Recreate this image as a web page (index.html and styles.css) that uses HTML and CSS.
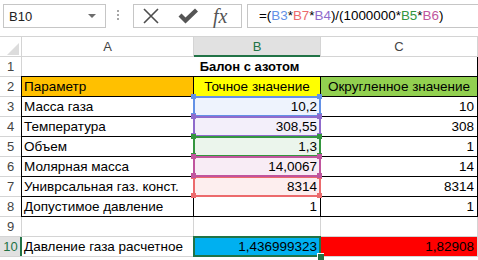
FILE: index.html
```html
<!DOCTYPE html>
<html lang="ru">
<head>
  <meta charset="UTF-8" />
  <meta name="viewport" content="width=device-width, initial-scale=1.0" />
  <title>Балон с азотом</title>
  <link rel="stylesheet" href="styles.css">
</head>
<body>
  <div class="formula-bar">
    <div class="name-box">B10<span class="arrow"></span></div>
    <div class="grip"><i></i><i></i><i></i></div>
    <div class="fx-buttons">
      <svg class="ico-cancel" width="16" height="16" viewBox="0 0 16 16">
        <path d="M1 1 L15 15 M15 1 L1 15" stroke="#4d4d4d" stroke-width="1.6" fill="none" />
      </svg>
      <svg class="ico-enter" width="21" height="16" viewBox="0 0 21 16">
        <path d="M0.5 8.5 L3.5 5.5 L7.5 9.5 L17 0.5 L20 3.5 L7.5 15.5 Z" fill="#555" />
      </svg>
      <span class="fx">fx</span>
    </div>
    <div class="formula">=(<span class="ref-b3">B3</span>*<span class="ref-b7">B7</span>*<span class="ref-b4">B4</span>)/(1000000*<span class="ref-b5">B5</span>*<span class="ref-b6">B6</span>)</div>
  </div>

  <div class="sheet">
    <div class="corner"></div>
    <div class="col-head">A</div>
    <div class="col-head active">B</div>
    <div class="col-head">C</div>

    <div class="row-head">1</div>
    <div class="cell title">Балон с азотом</div>

    <div class="row-head">2</div>
    <div class="cell bordered orange">Параметр</div>
    <div class="cell bordered yellow center">Точное значение</div>
    <div class="cell bordered green center">Округленное значение</div>

    <div class="row-head">3</div>
    <div class="cell bordered">Масса газа</div>
    <div class="cell num ref b3">10,2</div>
    <div class="cell bordered num">10</div>

    <div class="row-head">4</div>
    <div class="cell bordered">Температура</div>
    <div class="cell num ref b4">308,55</div>
    <div class="cell bordered num">308</div>

    <div class="row-head">5</div>
    <div class="cell bordered">Объем</div>
    <div class="cell num ref b5">1,3</div>
    <div class="cell bordered num">1</div>

    <div class="row-head">6</div>
    <div class="cell bordered">Молярная масса</div>
    <div class="cell num ref b6">14,0067</div>
    <div class="cell bordered num">14</div>

    <div class="row-head">7</div>
    <div class="cell bordered">Униврсальная газ. конст.</div>
    <div class="cell num ref b7">8314</div>
    <div class="cell bordered num">8314</div>

    <div class="row-head">8</div>
    <div class="cell bordered">Допустимое давление</div>
    <div class="cell bordered num">1</div>
    <div class="cell bordered num">1</div>

    <div class="row-head">9</div>
    <div class="cell"></div>
    <div class="cell"></div>
    <div class="cell"></div>

    <div class="row-head active">10</div>
    <div class="cell">Давление газа расчетное</div>
    <div class="cell num current">1,436999323</div>
    <div class="cell num red">1,82908</div>
  </div>
</body>
</html>
```

FILE: styles.css
```css
/* Цвета листа */
:root {
  --grid: #d4d4d4;
  --box-line: #c6c6c6;
  --head-text: #444444;
  --excel-green: #217346;
  --ref-b3: #6391e6;
  --ref-b4: #8f6bcc;
  --ref-b5: #34963f;
  --ref-b6: #c0559e;
  --ref-b7: #ec6a6c;
}

* {
  box-sizing: border-box;
}

body {
  margin: 0;
  width: 478px;
  height: 260px;
  overflow: hidden;
  background: #fff;
  color: #000;
  font-family: 'Liberation Sans', Arial, sans-serif;
  font-size: 13.5px;
}

/* Строка формул */
.formula-bar {
  display: flex;
  align-items: flex-start;
  height: 36px;
  padding: 4px 0 0 3px;
}

.name-box {
  display: flex;
  align-items: center;
  justify-content: space-between;
  width: 103px;
  height: 24px;
  padding: 0 9px 0 5px;
  border: 1px solid var(--box-line);
  color: #222;
  font-size: 13px;
}

.name-box .arrow {
  width: 0;
  height: 0;
  border-left: 4px solid transparent;
  border-right: 4px solid transparent;
  border-top: 4px solid #6d6d6d;
}

.grip {
  display: flex;
  flex-direction: column;
  gap: 2px;
  margin: 6px 14px 0 11px;
}

.grip i {
  width: 2px;
  height: 2px;
  background: #a6a6a6;
}

.fx-buttons {
  display: flex;
  align-items: center;
  width: 109px;
  height: 24px;
  padding-left: 9px;
  border: 1px solid var(--box-line);
}

.ico-cancel {
  margin-right: 19px;
}

.ico-enter {
  margin-right: 14px;
}

.fx {
  font-family: 'Liberation Serif', 'Times New Roman', serif;
  font-style: italic;
  font-size: 20px;
  color: #555;
  line-height: 22px;
}

.formula {
  flex: 1;
  height: 24px;
  margin-left: 5px;
  padding-left: 11px;
  border: 1px solid var(--box-line);
  border-right: none;
  line-height: 22px;
  font-size: 13.4px;
  color: #000;
}

.ref-b3 { color: var(--ref-b3); }
.ref-b4 { color: var(--ref-b4); }
.ref-b5 { color: var(--ref-b5); }
.ref-b6 { color: var(--ref-b6); }
.ref-b7 { color: var(--ref-b7); }

/* Лист */
.sheet {
  display: grid;
  grid-template-columns: 21px 171px 126px 156px;
  grid-auto-rows: 19px;
  gap: 1px;
  padding: 1px 1px 1px 0;
  background: var(--grid);
}

.corner {
  display: flex;
  justify-content: flex-end;
  align-items: flex-end;
  padding: 0 2px 1px 0;
  background: #fff;
}

.corner::after {
  content: "";
  border-left: 12px solid transparent;
  border-bottom: 12px solid #dcdcdc;
}

.col-head,
.row-head {
  background: #fff;
  color: var(--head-text);
  text-align: center;
  line-height: 19px;
  font-size: 13px;
}

.col-head.active {
  background: #e1e1e1;
  color: var(--excel-green);
  box-shadow: inset 0 -1px 0 var(--excel-green), 0 1px 0 var(--excel-green);
}

.row-head.active {
  background: #e1e1e1;
  color: var(--excel-green);
  box-shadow: inset -1px 0 0 var(--excel-green), 1px 0 0 var(--excel-green);
}

.cell {
  background: #fff;
  padding: 0 2px;
  line-height: 20px;
  white-space: nowrap;
}

.num {
  text-align: right;
  padding-right: 3px;
}

.center {
  text-align: center;
}

.title {
  grid-column: 2 / 5;
  text-align: center;
  font-weight: bold;
  font-size: 13px;
  box-shadow: 1px 0 0 #000;
}

.bordered {
  outline: 1px solid #000;
}

.orange { background: #ffc000; }
.yellow { background: #ffff00; }
.green { background: #92d050; }
.red { background: #ff0000; }

/* Диапазоны из формулы */
.ref {
  position: relative;
  outline: 2px solid var(--c);
  outline-offset: -1px;
}

.ref::before {
  content: "";
  position: absolute;
  left: -3px;
  top: -3px;
  width: 5px;
  height: 5px;
  background: var(--c);
  box-shadow: 126px 0 0 var(--c), 0 19px 0 var(--c), 126px 19px 0 var(--c);
}

.b3 { --c: var(--ref-b3); background: #eef3fd; z-index: 1; }
.b7 { --c: var(--ref-b7); background: #fdeeee; z-index: 2; }
.b4 { --c: var(--ref-b4); background: #f3effa; z-index: 3; }
.b5 { --c: var(--ref-b5); background: #ebf5ec; z-index: 4; }
.b6 { --c: var(--ref-b6); background: #f8ecf5; z-index: 5; }

.current {
  position: relative;
  z-index: 6;
  background: #00b0f0;
  outline: 2px solid var(--excel-green);
  outline-offset: -1px;
}

.current::after {
  content: "";
  position: absolute;
  right: -4px;
  bottom: -4px;
  width: 6px;
  height: 6px;
  background: var(--excel-green);
  border-left: 1px solid #fff;
  border-top: 1px solid #fff;
}
```
